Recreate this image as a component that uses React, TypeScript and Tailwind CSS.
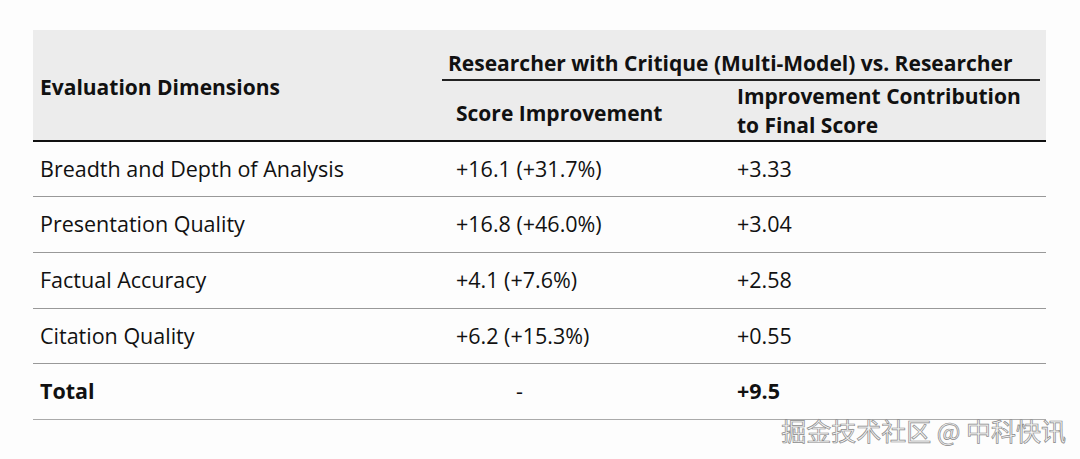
const rows = [
  { dim: "Breadth and Depth of Analysis", score: "+16.1 (+31.7%)", contrib: "+3.33", h: "h-[55px]" },
  { dim: "Presentation Quality", score: "+16.8 (+46.0%)", contrib: "+3.04", h: "h-[56px]" },
  { dim: "Factual Accuracy", score: "+4.1 (+7.6%)", contrib: "+2.58", h: "h-[56px]" },
  { dim: "Citation Quality", score: "+6.2 (+15.3%)", contrib: "+0.55", h: "h-[55px]" },
];

export default function App() {
  return (
    <div
      className="w-[1080px] h-[459px] bg-[#fdfdfd] text-[#111] pt-[30px] pl-[33px] overflow-hidden"
      style={{ fontFamily: '"Open Sans", "Noto Sans", sans-serif' }}
    >
      <div className="w-[1013px]">
        {/* header */}
        <div className="bg-[#ececec] h-[110px] flex font-bold text-[21px]">
          <div className="w-[407px] flex items-center pl-[7px] pt-[5px]">Evaluation Dimensions</div>
          <div className="flex-1 flex flex-col">
            <div className="h-[55px] flex items-end pl-[2px] pr-[6px]">
              <div className="w-full border-b-2 border-[#222] pb-[1px] pl-[6px] leading-[29px]">
                Researcher with Critique (Multi-Model) vs. Researcher
              </div>
            </div>
            <div className="flex flex-1">
              <div className="w-[281px] pl-[16px] pt-[18px] leading-[29px]">Score Improvement</div>
              <div className="flex-1 pl-[16px] pt-[1px] leading-[29px]">
                Improvement Contribution
                <br />
                to Final Score
              </div>
            </div>
          </div>
        </div>
        <div className="h-[2px] bg-[#111]" />
        {/* body */}
        <div className="text-[21.5px]">
          {rows.map((r) => (
            <div key={r.dim} className={`grid grid-cols-[407px_281px_325px] ${r.h} items-center border-b border-[#999]`}>
              <div className="pl-[7px]">{r.dim}</div>
              <div className="pl-[16px]">{r.score}</div>
              <div className="pl-[16px]">{r.contrib}</div>
            </div>
          ))}
          <div className="grid grid-cols-[407px_281px_325px] h-[56px] items-center border-b border-[#aaa] font-bold">
            <div className="pl-[7px]">Total</div>
            <div className="pl-[76px] font-normal">-</div>
            <div className="pl-[16px]">+9.5</div>
          </div>
        </div>
      </div>
      <div className="flex justify-end pr-[14px] -mt-[4px]">
        <span
          className="text-[25px] text-[#f4f4f4] [-webkit-text-stroke:0.7px_#8a8a8a] leading-[28px]"
          style={{ fontFamily: '"Noto Sans CJK SC", sans-serif' }}
        >
          掘金技术社区 @ 中科快讯
        </span>
      </div>
    </div>
  );
}
